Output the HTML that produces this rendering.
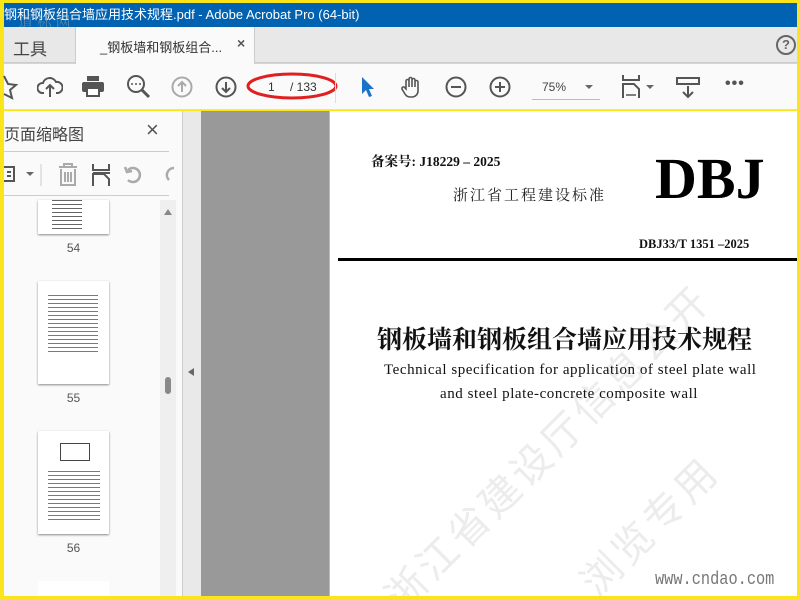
<!DOCTYPE html>
<html><head><meta charset="utf-8"><style>
*{margin:0;padding:0;box-sizing:border-box}
html,body{width:800px;height:600px;overflow:hidden}
body{background:#f9e51a;position:relative;font-family:"Liberation Sans","Noto Sans CJK SC",sans-serif}
.a{position:absolute}
.thumb{position:absolute;left:38px;width:71px;background:#fff;box-shadow:0 1px 2px #888}
.lines{position:absolute;background:repeating-linear-gradient(#222 0 1px,transparent 1px 4px)}
.num{position:absolute;width:71px;left:38px;text-align:center;font-size:12px;color:#555}
svg{position:absolute}
</style></head><body>
<div class="a" style="left:4px;top:3px;width:793px;height:24px;background:#0062b1;color:#fff;font-size:13px;line-height:24px;white-space:nowrap;overflow:hidden">钢和钢板组合墙应用技术规程.pdf - Adobe Acrobat Pro (64-bit)</div>
<div class="a" style="left:18px;top:11px;color:#9aa;font-size:15px;opacity:.5;font-family:'Noto Serif CJK SC',serif">道 标 网</div>
<div class="a" style="left:4px;top:27px;width:793px;height:36px;background:#e8e8e8;border-bottom:1px solid #ccc"></div>
<div class="a" style="left:13px;top:35px;font-size:17px;color:#444">工具</div>
<div class="a" style="left:75px;top:27px;width:180px;height:37px;background:#fafafa;border-left:1px solid #ccc;border-right:1px solid #ccc"></div>
<div class="a" style="left:100px;top:37px;font-size:13px;color:#333">_钢板墙和钢板组合...</div>
<div class="a" style="left:237px;top:35px;font-size:14px;color:#555;font-weight:bold">×</div>
<div class="a" style="left:776px;top:35px;width:20px;height:20px;border:2px solid #666;border-radius:50%;font-size:13px;font-weight:bold;color:#666;text-align:center;line-height:16px">?</div>
<div class="a" style="left:4px;top:64px;width:793px;height:46px;background:#fafafa;border-bottom:1px solid #ddd"></div>
<svg style="left:0;top:72px" width="20" height="30"><path d="M4 4 L8 12 L16 13 L10 18 L12 26 L4 22" fill="none" stroke="#555" stroke-width="2"/></svg>
<svg style="left:37px;top:74px" width="26" height="26"><path d="M7 19 H5 A5 5 0 0 1 6 9 A7 7 0 0 1 19 8 A5 5 0 0 1 21 19 H19 M13 23 V12 M9 15 L13 11 L17 15" fill="none" stroke="#555" stroke-width="2"/></svg>
<svg style="left:81px;top:74px" width="24" height="24"><rect x="6" y="2" width="12" height="5" fill="#555"/><rect x="1" y="8" width="22" height="10" rx="2" fill="#555"/><rect x="6" y="14" width="12" height="8" fill="#fff" stroke="#555" stroke-width="2"/></svg>
<svg style="left:126px;top:74px" width="26" height="26"><circle cx="10" cy="10" r="8" fill="none" stroke="#555" stroke-width="2"/><path d="M16 16 L23 23" stroke="#555" stroke-width="3"/><circle cx="6" cy="10" r="1" fill="#555"/><circle cx="10" cy="10" r="1" fill="#555"/><circle cx="14" cy="10" r="1" fill="#555"/></svg>
<svg style="left:171px;top:76px" width="22" height="22"><circle cx="11" cy="11" r="9.5" fill="none" stroke="#aaa" stroke-width="2"/><path d="M11 16 V6 M7 10 L11 6 L15 10" fill="none" stroke="#aaa" stroke-width="2"/></svg>
<svg style="left:215px;top:76px" width="22" height="22"><circle cx="11" cy="11" r="9.5" fill="none" stroke="#555" stroke-width="2"/><path d="M11 6 V16 M7 12 L11 16 L15 12" fill="none" stroke="#555" stroke-width="2"/></svg>
<svg style="left:245px;top:70px" width="95" height="32"><ellipse cx="47" cy="16" rx="44" ry="12" fill="none" stroke="#e02020" stroke-width="3"/></svg>
<div class="a" style="left:268px;top:80px;font-size:12px;color:#333">1</div>
<div class="a" style="left:290px;top:80px;font-size:12px;color:#333">/ 133</div>
<div class="a" style="left:335px;top:73px;width:1px;height:30px;background:#ddd"></div>
<svg style="left:360px;top:76px" width="16" height="22"><path d="M2 1 L2 18 L6 14 L9 21 L12 20 L9 13 L14 13 Z" fill="#1a73c8"/></svg>
<svg style="left:400px;top:75px" width="24" height="24"><path d="M6 14 V6 a1.5 1.5 0 0 1 3 0 V12 V4 a1.5 1.5 0 0 1 3 0 V12 V5 a1.5 1.5 0 0 1 3 0 V12 V7 a1.5 1.5 0 0 1 3 0 V16 a6 6 0 0 1 -6 6 h-2 a6 6 0 0 1 -5 -3 L2 14 a1.5 1.5 0 0 1 3 -1 Z" fill="none" stroke="#555" stroke-width="1.6"/></svg>
<svg style="left:445px;top:76px" width="22" height="22"><circle cx="11" cy="11" r="9.5" fill="none" stroke="#555" stroke-width="2"/><path d="M6 11 H16" stroke="#555" stroke-width="2"/></svg>
<svg style="left:489px;top:76px" width="22" height="22"><circle cx="11" cy="11" r="9.5" fill="none" stroke="#555" stroke-width="2"/><path d="M6 11 H16 M11 6 V16" stroke="#555" stroke-width="2"/></svg>
<div class="a" style="left:542px;top:80px;font-size:12px;color:#444">75%</div>
<div class="a" style="left:585px;top:85px;border:4px solid transparent;border-top:4px solid #666"></div>
<div class="a" style="left:532px;top:99px;width:68px;height:1px;background:#bbb"></div>
<svg style="left:620px;top:74px" width="36" height="26"><path d="M3 1 V6 H19 V1 M3 24 V10 H14 L19 15 V24" fill="none" stroke="#555" stroke-width="2"/><path d="M6 21 H16" stroke="#555" stroke-width="1.5"/><path d="M26 11 L34 11 L30 15 Z" fill="#666"/></svg>
<svg style="left:676px;top:76px" width="24" height="24"><rect x="1" y="2" width="22" height="6" fill="none" stroke="#555" stroke-width="2"/><path d="M12 10 V21 M7 16 L12 21 L17 16" fill="none" stroke="#555" stroke-width="2"/></svg>
<div class="a" style="left:725px;top:75px;font-size:16px;color:#555;font-weight:bold;letter-spacing:1px">•••</div>
<div class="a" style="left:4px;top:111px;width:178px;height:485px;background:#fafafa"></div>
<div class="a" style="left:4px;top:121px;font-size:16px;color:#444">页面缩略图</div>
<div class="a" style="left:146px;top:117px;font-size:22px;color:#555">×</div>
<div class="a" style="left:4px;top:151px;width:165px;height:1px;background:#ccc"></div>
<div class="a" style="left:4px;top:195px;width:165px;height:1px;background:#ccc"></div>
<svg style="left:4px;top:162px" width="170" height="26"><path d="M0 5 H10 V19 H0 M3 10 H7 M3 14 H7" fill="none" stroke="#555" stroke-width="2"/><path d="M22 10 L30 10 L26 14 Z" fill="#666"/><path d="M37 2 V24" stroke="#ccc"/><path d="M55 5 H73 M60 5 V2 H68 V5 M57 7 V23 H71 V7 M61 10 V20 M64 10 V20 M67 10 V20" fill="none" stroke="#aaa" stroke-width="2"/><path d="M89 2 V8 H105 V2 M89 24 V12 H100 L105 17 V24 M89 11 H106" fill="none" stroke="#555" stroke-width="2"/><path d="M124 18 A7 7 0 1 0 124 8 M121 5 L123 10 L128 9" fill="none" stroke="#aaa" stroke-width="2.5"/><path d="M170 6 A7 7 0 0 0 165 18" fill="none" stroke="#aaa" stroke-width="2.5"/></svg>
<div class="thumb" style="top:200px;height:34px"><div class="lines" style="left:14px;top:0;width:30px;height:30px;opacity:.7"></div></div>
<div class="num" style="top:241px">54</div>
<div class="thumb" style="top:281px;height:103px"><div class="lines" style="left:10px;top:14px;width:50px;height:60px;opacity:.6"></div></div>
<div class="num" style="top:391px">55</div>
<div class="thumb" style="top:431px;height:103px"><div class="a" style="left:22px;top:12px;width:30px;height:18px;border:1px solid #444"></div><div class="lines" style="left:10px;top:40px;width:52px;height:50px;opacity:.6"></div></div>
<div class="num" style="top:541px">56</div>
<div class="thumb" style="top:581px;height:15px;box-shadow:none"></div>
<div class="a" style="left:160px;top:200px;width:16px;height:396px;background:#efefef"></div>
<div class="a" style="left:164px;top:209px;border:4px solid transparent;border-bottom:6px solid #888;border-top:0"></div>
<div class="a" style="left:165px;top:377px;width:6px;height:17px;border-radius:3px;background:#888"></div>
<div class="a" style="left:182px;top:111px;width:1px;height:485px;background:#ccc"></div>
<div class="a" style="left:183px;top:111px;width:18px;height:485px;background:#e9e9e9"></div>
<div class="a" style="left:188px;top:368px;border:4px solid transparent;border-right:6px solid #666;border-left:0;height:0"></div>
<div class="a" style="left:201px;top:111px;width:128px;height:485px;background:#999"></div>
<div class="a" style="left:329px;top:111px;width:1px;height:485px;background:#bbb"></div>
<div class="a" style="left:330px;top:111px;width:467px;height:485px;overflow:hidden;background:#fff">
<div class="a" style="left:40px;top:470px;font-size:40px;color:#ececec;transform:rotate(-45deg);transform-origin:left top;white-space:nowrap;letter-spacing:4px">浙江省建设厅信息公开</div>
<div class="a" style="left:235px;top:455px;font-size:40px;color:#ececec;transform:rotate(-45deg);transform-origin:left top;white-space:nowrap;letter-spacing:4px">浏览专用</div>
</div>
<div class="a" style="left:371px;top:150px;font-size:13.5px;font-weight:bold;color:#111;font-family:'Liberation Serif','Noto Serif CJK SC',serif">备案号: J18229 – 2025</div>
<div class="a" style="left:453px;top:184px;font-size:15px;color:#222;letter-spacing:2px;font-family:'Noto Serif CJK SC',serif">浙江省工程建设标准</div>
<div class="a" style="left:655px;top:146px;font-size:58px;font-weight:bold;color:#000;font-family:'Liberation Serif',serif;line-height:66px">DBJ</div>
<div class="a" style="left:639px;top:237px;font-size:12.5px;font-weight:bold;color:#111;font-family:'Liberation Serif',serif">DBJ33/T 1351 –2025</div>
<div class="a" style="left:338px;top:258px;width:459px;height:3px;background:#000"></div>
<div class="a" style="left:377px;top:320px;font-size:25px;font-weight:bold;color:#111;font-family:'Noto Serif CJK SC',serif">钢板墙和钢板组合墙应用技术规程</div>
<div class="a" style="left:384px;top:362px;font-size:15px;color:#111;font-family:'Liberation Serif',serif;letter-spacing:.55px">Technical specification for application of steel plate wall</div>
<div class="a" style="left:440px;top:386px;font-size:15px;color:#111;font-family:'Liberation Serif',serif;letter-spacing:.55px">and steel plate-concrete composite wall</div>
<div class="a" style="left:655px;top:570px;font-size:18px;color:#777;font-family:'Liberation Mono',monospace;transform:scaleX(.85);transform-origin:left">www.cndao.com</div>
</body></html>
